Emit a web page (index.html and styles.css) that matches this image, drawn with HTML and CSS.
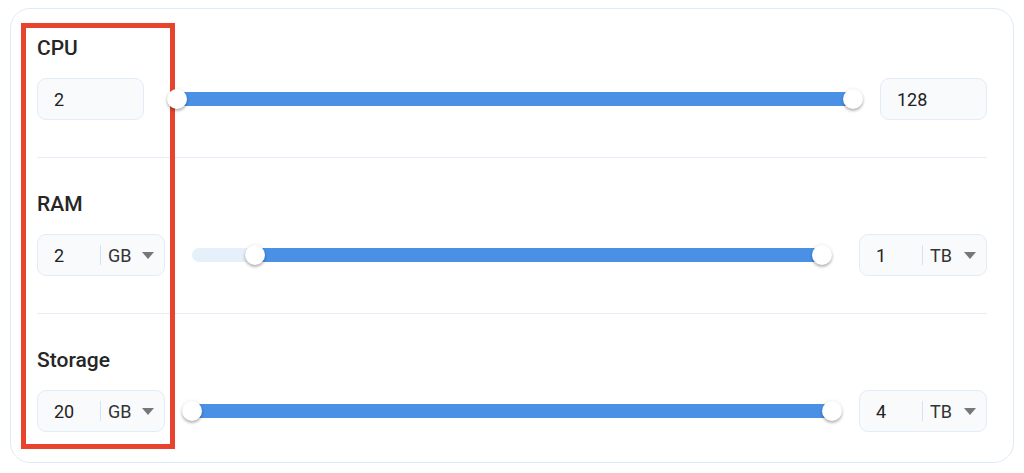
FILE: index.html
```html
<!DOCTYPE html>
<html lang="en">
<head>
    <meta charset="UTF-8">
    <meta name="viewport" content="width=device-width, initial-scale=1.0">
    <title>Server Resources</title>
    <link rel="stylesheet" href="styles.css">
</head>
<body>
    <div class="resource-card">
        <div class="highlight"></div>

        <div class="resource">
            <div class="resource-label">CPU</div>
            <div class="resource-row">
                <div class="value-box value-box-small"><span class="num">2</span></div>
                <div class="slider slider-cpu">
                    <div class="rail">
                        <div class="fill" style="left: 0%; right: 0%;"></div>
                        <div class="thumb" style="left: 0%;"></div>
                        <div class="thumb" style="left: 100%;"></div>
                    </div>
                </div>
                <div class="value-box value-box-small"><span class="num">128</span></div>
            </div>
        </div>

        <div class="resource">
            <div class="resource-label">RAM</div>
            <div class="resource-row">
                <div class="value-box">
                    <span class="num">2</span>
                    <span class="sep"></span>
                    <span class="unit">GB</span>
                    <span class="caret"></span>
                </div>
                <div class="slider slider-ram">
                    <div class="rail">
                        <div class="fill" style="left: 8.84%; right: 0%;"></div>
                        <div class="thumb" style="left: 8.84%;"></div>
                        <div class="thumb" style="left: 100%;"></div>
                    </div>
                </div>
                <div class="value-box">
                    <span class="num">1</span>
                    <span class="sep"></span>
                    <span class="unit">TB</span>
                    <span class="caret"></span>
                </div>
            </div>
        </div>

        <div class="resource">
            <div class="resource-label">Storage</div>
            <div class="resource-row">
                <div class="value-box">
                    <span class="num">20</span>
                    <span class="sep"></span>
                    <span class="unit">GB</span>
                    <span class="caret"></span>
                </div>
                <div class="slider slider-storage">
                    <div class="rail">
                        <div class="fill" style="left: 0%; right: 0%;"></div>
                        <div class="thumb" style="left: 0%;"></div>
                        <div class="thumb" style="left: 100%;"></div>
                    </div>
                </div>
                <div class="value-box">
                    <span class="num">4</span>
                    <span class="sep"></span>
                    <span class="unit">TB</span>
                    <span class="caret"></span>
                </div>
            </div>
        </div>
    </div>
</body>
</html>
```

FILE: styles.css
```css
* {
    box-sizing: border-box;
}
body {
    font-family: Roboto, "Liberation Sans", Arial, sans-serif;
    margin: 0;
    padding: 8px 10px 0 10px;
    background-color: #fff;
    color: #222;
}
.resource-card {
    position: relative;
    width: 1004px;
    background-color: #fff;
    border: 1px solid #dfeaf7;
    border-radius: 20px;
    padding: 27px 26px 30px 26px;
}
/* red annotation frame drawn over the left column */
.highlight {
    position: absolute;
    left: 10px;
    top: 14px;
    width: 154px;
    height: 426px;
    border: 5px solid #e8432c;
    pointer-events: none;
}
.resource + .resource {
    margin-top: 37px;
    padding-top: 34px;
    border-top: 1px solid #e6eef8;
}
.resource-label {
    font-size: 21px;
    font-weight: 500;
    line-height: 25px;
    color: #262626;
    margin-bottom: 17px;
}
.resource-row {
    display: flex;
    align-items: center;
    height: 42px;
}
.value-box {
    display: flex;
    align-items: center;
    width: 128px;
    height: 42px;
    padding: 0 10px 0 16px;
    background-color: #f8fafc;
    border: 1px solid #e2ecf8;
    border-radius: 9px;
    font-size: 18px;
    color: #222;
}
.value-box-small {
    width: 107px;
}
.num {
    width: 46px;
}
.sep {
    width: 1px;
    height: 20px;
    background-color: #d3e3f6;
}
.unit {
    margin-left: 7px;
    color: #333;
}
.caret {
    margin-left: auto;
    width: 0;
    height: 0;
    border-left: 6.5px solid transparent;
    border-right: 6.5px solid transparent;
    border-top: 7px solid #777;
}
.slider {
    flex: 1;
    position: relative;
    height: 20px;
    padding: 0 8px;
}
.slider::before {
    content: "";
    position: absolute;
    left: 0;
    right: 0;
    top: 3px;
    height: 14px;
    border-radius: 7px;
    background-color: #e6f0fa;
}
.slider-cpu {
    margin: 0 19px 0 25px;
}
.slider-ram {
    margin: 0 29px 0 27px;
}
.slider-storage {
    margin: 0 19px 0 19px;
}
.rail {
    position: relative;
    height: 20px;
}
.fill {
    position: absolute;
    top: 3px;
    height: 14px;
    background-color: #4a91e6;
}
.thumb {
    position: absolute;
    top: 0;
    width: 20px;
    height: 20px;
    margin-left: -10px;
    border-radius: 50%;
    background-color: #fff;
    box-shadow: 0 2px 3px rgba(0, 0, 0, 0.28), 0 0 4px rgba(0, 0, 0, 0.08);
}
```
